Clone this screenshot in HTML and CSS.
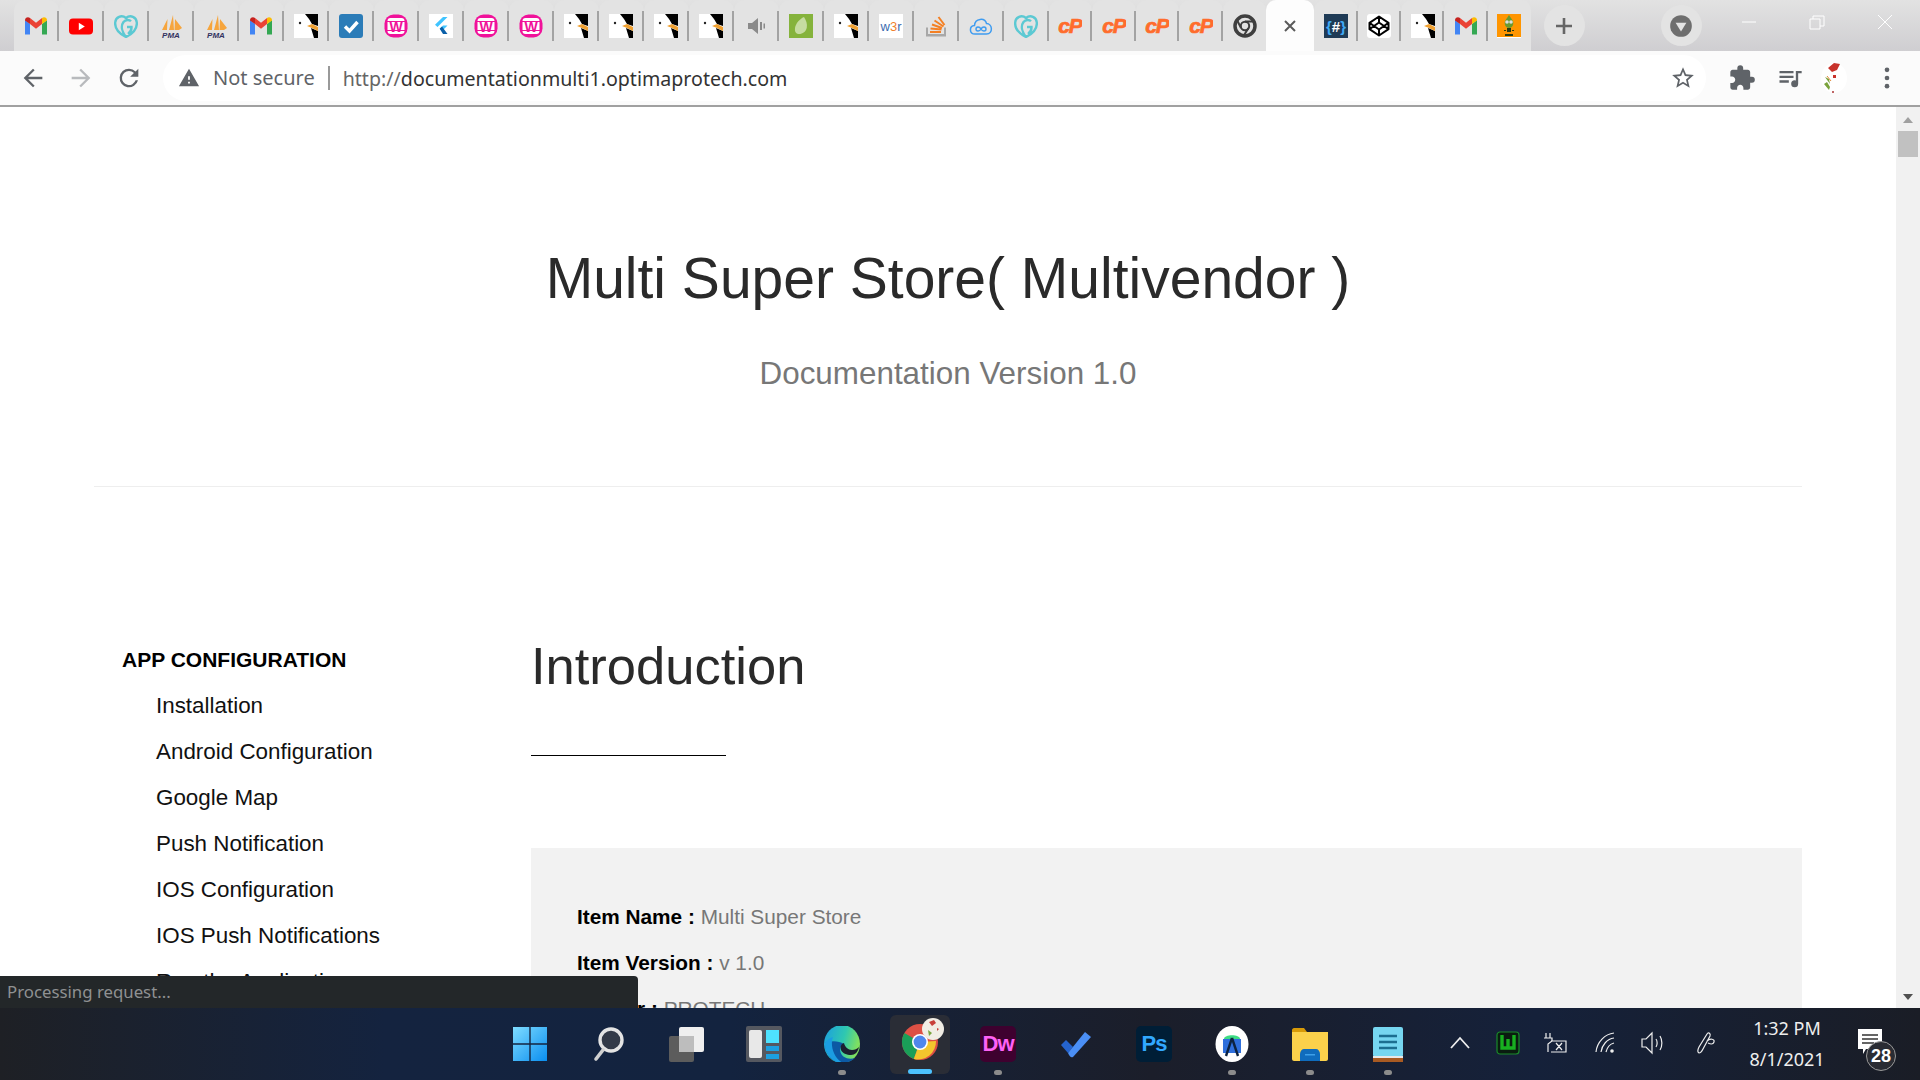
FILE: index.html
```html
<!DOCTYPE html>
<html lang="en">
<head>
    <meta charset="UTF-8">
    <meta name="viewport" content="width=device-width, initial-scale=1.0">
    <title>Multi Super Store - Documentation</title>
    <link rel="stylesheet" href="styles.css">
</head>
<body>
    <!-- favicons used more than once in the tab strip -->
    <svg class="sprites" width="0" height="0">
        <symbol id="gmail" viewBox="0 0 24 24">
            <path fill="#4285f4" d="M1 20.500h5V10L1 6z"/>
            <path fill="#34a853" d="M18 20.500h5V6l-5 4z"/>
            <path fill="#ea4335" d="M6 10V4l6 4.800L18 4v6l-6 4.800z"/>
            <path fill="#c5221f" d="M1 6.500V6c0-2.400 3-3.700 5-2v6z"/>
            <path fill="#fbbc04" d="M18 4c2-1.700 5-.4 5 2v.5L18 10z"/>
        </symbol>
        <symbol id="youtube" viewBox="0 0 24 24">
            <rect y="4.500" width="24" height="16" rx="4" fill="#f00"/>
            <path fill="#fff" d="M9.800 8.800l6 3.700-6 3.700z"/>
        </symbol>
        <symbol id="grav" viewBox="0 0 24 24">
            <path fill="none" stroke="#5cc9d3" stroke-width="2.400" d="M12 23C5 19.500.8 14 1.200 8.500 1.600 3 7.500.4 12 4 16.500.4 22.400 3 22.800 8.500 23.200 14 19 19.500 12 23zM12 23C8 18 6.500 12 9.500 8c2.200-2.800 6-2.400 7.500-.8M13 13h4.500c.2 3-1.500 5.500-3.500 7"/>
        </symbol>
        <symbol id="gull" viewBox="0 0 24 24">
            <rect width="24" height="24" fill="#fff"/>
            <path fill="#000" d="M11 0h13v12l-6-2-3-5zM17 14l7 3v7h-4z"/>
            <path fill="#f0a030" d="M13 12l5-2 6 3v4l-6-3z"/>
            <circle cx="6" cy="9" r="1.200" fill="#222"/>
        </symbol>
        <symbol id="todo" viewBox="0 0 24 24">
            <rect width="24" height="24" rx="3" fill="#2b7cb8"/>
            <path fill="none" stroke="#fff" stroke-width="3.400" d="M6 12.500l4.500 4.500L18.500 8"/>
        </symbol>
        <symbol id="flutter" viewBox="0 0 24 24">
            <rect width="24" height="24" fill="#fff"/>
            <path fill="#40c4ff" d="M14 3h4.500l-10 10L6 10.700zM14 11.500h4.500L13 17l-2.300-2.200z"/>
            <path fill="#0a5fa8" d="M10.700 14.800L13 12.500 18.500 20H14z"/>
        </symbol>
        <symbol id="mute" viewBox="0 0 24 24">
            <path fill="#8a8a8a" d="M4 9h4l6-5v16l-6-5H4zM16 8h2v8h-2zM19.500 9.500h1.500v5h-1.500z"/>
        </symbol>
        <symbol id="evernote" viewBox="0 0 24 24">
            <rect width="24" height="24" fill="#85b33c"/>
            <path fill="#c6dca1" d="M15 3c2 3 3.500 7 2.800 10.500C17 18 13 20.500 9 20c-2.500-.5-3.500-3-3-6 .8-4.500 4.500-9 9-11z"/>
        </symbol>
        <symbol id="stack" viewBox="0 0 24 24">
            <path fill="#a8a8a8" d="M2 13.500h2V20h16v-6.500h2V22.500H2z"/>
            <path fill="none" stroke="#f48024" stroke-width="2" d="M6 18h11M6.500 14.500l11 1M8 10.500l10 3.500M10.500 6.500l9 6M14.500 3l6 8"/>
        </symbol>
        <symbol id="cloud" viewBox="0 0 24 24">
            <path fill="none" stroke="#3f9cf0" stroke-width="1.500" d="M6 20c-6 0-6-8-.5-8.500C6 4 16 3.500 17.500 9.500c6 0 7 10.500 0 10.500z"/>
            <path fill="none" stroke="#3f9cf0" stroke-width="1.400" d="M12 15c-1.500-3-5-2.500-5 0s3.500 3 5 0 5-2.500 5 0-3.500 3-5 0z"/>
        </symbol>
        <symbol id="chromebw" viewBox="0 0 24 24">
            <circle cx="12" cy="12" r="10" fill="none" stroke="#3f3f3f" stroke-width="3.500"/>
            <circle cx="12" cy="12" r="4.200" fill="none" stroke="#3f3f3f" stroke-width="2"/>
            <path stroke="#3f3f3f" stroke-width="2" d="M12 7.500h9M8 14l-4-8M15.500 14l-5 8"/>
        </symbol>
        <symbol id="codepen" viewBox="0 0 24 24">
            <rect width="24" height="24" rx="3" fill="#fff"/>
            <path fill="none" stroke="#000" stroke-width="2" stroke-linejoin="round" d="M12 2.500l9.500 6.300v6.400L12 21.500l-9.500-6.300V8.800zM12 8.500l-5 3.500 5 3.500 5-3.500zM12 2.500v6M12 15.500v6M2.500 8.800L7 12l-4.500 3.200M21.500 8.800L17 12l4.500 3.200"/>
        </symbol>
        <symbol id="mascot" viewBox="0 0 24 24">
            <rect width="24" height="24" fill="#ff9500"/>
            <rect y="23" width="24" height="1" fill="#fff"/>
            <path fill="#6a9a2e" d="M12 1l4 6c1 4-1 7-4 7s-5-3-4-7z"/>
            <circle cx="10" cy="8" r="1.800" fill="#ddd"/><circle cx="14" cy="8" r="1.800" fill="#ddd"/>
            <path fill="#2c3a10" d="M10 14h4v4h-4zM7 16h2v1H7zM15 16h2v1h-2zM8 20h8v2H8z"/>
        </symbol>
        <symbol id="sails" viewBox="0 0 24 24">
            <path fill="#f6a53d" d="M3 16L8.500 5 8 16zM10 16L14 1l1 15zM15.500 16L16 5l7 9-3 2z"/>
        </symbol>
        <symbol id="wamp-ring" viewBox="0 0 24 24">
            <rect x=".5" y=".5" width="23" height="23" rx="9" fill="#f0129a"/>
            <rect x="3.500" y="4" width="17" height="16" rx="3" fill="#fff"/>
            <path fill="#f0129a" d="M3 7h18v1H3zM3 16h18v1H3z"/>
        </symbol>
    </svg>

    <div class="tab-strip">
        <div class="tab"><svg class="favicon"><use href="#gmail"/></svg></div>
        <div class="tab"><svg class="favicon"><use href="#youtube"/></svg></div>
        <div class="tab"><svg class="favicon"><use href="#grav"/></svg></div>
        <div class="tab"><svg class="favicon" viewBox="0 0 24 24"><use href="#sails"/><text class="sym-text" x="12" y="23.500" text-anchor="middle" font-size="8" font-style="italic" fill="#33335f">PMA</text></svg></div>
        <div class="tab"><svg class="favicon" viewBox="0 0 24 24"><use href="#sails"/><text class="sym-text" x="12" y="23.500" text-anchor="middle" font-size="8" font-style="italic" fill="#33335f">PMA</text></svg></div>
        <div class="tab"><svg class="favicon"><use href="#gmail"/></svg></div>
        <div class="tab"><svg class="favicon"><use href="#gull"/></svg></div>
        <div class="tab"><svg class="favicon"><use href="#todo"/></svg></div>
        <div class="tab"><svg class="favicon" viewBox="0 0 24 24"><use href="#wamp-ring"/><text class="sym-text" x="12" y="17.500" text-anchor="middle" font-size="14" fill="#f0129a">W</text></svg></div>
        <div class="tab"><svg class="favicon"><use href="#flutter"/></svg></div>
        <div class="tab"><svg class="favicon" viewBox="0 0 24 24"><use href="#wamp-ring"/><text class="sym-text" x="12" y="17.500" text-anchor="middle" font-size="14" fill="#f0129a">W</text></svg></div>
        <div class="tab"><svg class="favicon" viewBox="0 0 24 24"><use href="#wamp-ring"/><text class="sym-text" x="12" y="17.500" text-anchor="middle" font-size="14" fill="#f0129a">W</text></svg></div>
        <div class="tab"><svg class="favicon"><use href="#gull"/></svg></div>
        <div class="tab"><svg class="favicon"><use href="#gull"/></svg></div>
        <div class="tab"><svg class="favicon"><use href="#gull"/></svg></div>
        <div class="tab"><svg class="favicon"><use href="#gull"/></svg></div>
        <div class="tab"><svg class="favicon"><use href="#mute"/></svg></div>
        <div class="tab"><svg class="favicon"><use href="#evernote"/></svg></div>
        <div class="tab"><svg class="favicon"><use href="#gull"/></svg></div>
        <div class="tab"><svg class="favicon" viewBox="0 0 24 24"><rect width="24" height="24" fill="#fff"/><text class="sym-light" x="12" y="17" text-anchor="middle" font-size="13"><tspan fill="#3b6cb0">w</tspan><tspan fill="#f0812c">3</tspan><tspan fill="#3b6cb0">r</tspan></text></svg></div>
        <div class="tab"><svg class="favicon"><use href="#stack"/></svg></div>
        <div class="tab"><svg class="favicon"><use href="#cloud"/></svg></div>
        <div class="tab"><svg class="favicon"><use href="#grav"/></svg></div>
        <div class="tab narrow"><svg class="favicon" viewBox="0 0 24 24"><text class="cp-text" x="12" y="19" text-anchor="middle" font-size="21" letter-spacing="-1.200">cP</text></svg></div>
        <div class="tab narrow"><svg class="favicon" viewBox="0 0 24 24"><text class="cp-text" x="12" y="19" text-anchor="middle" font-size="21" letter-spacing="-1.200">cP</text></svg></div>
        <div class="tab narrow"><svg class="favicon" viewBox="0 0 24 24"><text class="cp-text" x="12" y="19" text-anchor="middle" font-size="21" letter-spacing="-1.200">cP</text></svg></div>
        <div class="tab narrow"><svg class="favicon" viewBox="0 0 24 24"><text class="cp-text" x="12" y="19" text-anchor="middle" font-size="21" letter-spacing="-1.200">cP</text></svg></div>
        <div class="tab narrow last"><svg class="favicon"><use href="#chromebw"/></svg></div>
        <div class="tab active">
            <svg class="tab-close" viewBox="0 0 16 16"><path d="M3 3l10 10M13 3L3 13"/></svg>
        </div>
        <div class="tab after"><svg class="favicon" viewBox="0 0 24 24"><rect width="24" height="24" fill="#1f3b56"/><text class="sym-text" x="12" y="17.500" text-anchor="middle" font-size="15"><tspan fill="#3fa9f5">{</tspan><tspan fill="#fff">#</tspan><tspan fill="#3fa9f5">}</tspan></text></svg></div>
        <div class="tab after"><svg class="favicon"><use href="#codepen"/></svg></div>
        <div class="tab after"><svg class="favicon"><use href="#gull"/></svg></div>
        <div class="tab after"><svg class="favicon"><use href="#gmail"/></svg></div>
        <div class="tab after last"><svg class="favicon"><use href="#mascot"/></svg></div>

        <div class="round-btn new-tab">
            <svg viewBox="0 0 20 20"><path d="M10 2v16M2 10h16"/></svg>
        </div>
        <div class="round-btn profile-drop">
            <svg viewBox="0 0 24 24"><circle cx="12" cy="12" r="10" fill="#6e6e6e"/><path fill="#e3e3e3" d="M7 9h10l-5 8z"/></svg>
        </div>
        <div class="window-controls">
            <svg viewBox="0 0 16 16"><path d="M1 8h14"/></svg>
            <svg viewBox="0 0 16 16"><path d="M1 5h10v10H1zM4 5V2h11v10h-4"/></svg>
            <svg viewBox="0 0 16 16"><path d="M1 1l14 14M15 1L1 15"/></svg>
        </div>
    </div>

    <div class="toolbar">
        <div class="nav-buttons">
            <svg class="tool-icon" viewBox="0 0 24 24"><path d="M20 11H7.830l5.590-5.590L12 4l-8 8 8 8 1.410-1.410L7.830 13H20v-2z"/></svg>
            <svg class="tool-icon disabled" viewBox="0 0 24 24"><path d="M12 4l-1.410 1.410L16.170 11H4v2h12.170l-5.580 5.590L12 20l8-8z"/></svg>
            <svg class="tool-icon" viewBox="0 0 24 24"><path d="M17.650 6.350A7.960 7.960 0 0 0 12 4a8 8 0 1 0 7.730 10h-2.080A6 6 0 1 1 12 6c1.660 0 3.140.69 4.220 1.780L13 11h7V4l-2.350 2.350z"/></svg>
        </div>
        <div class="omnibox">
            <svg class="warn-icon" viewBox="0 0 24 24"><path d="M1 21h22L12 2 1 21zm12-3h-2v-2h2v2zm0-4h-2v-4h2v4z"/></svg>
            <span class="not-secure">Not secure</span>
            <span class="url"><span class="scheme">http://</span>documentationmulti1.optimaprotech.com</span>
            <svg class="star-icon" viewBox="0 0 24 24"><path d="M22 9.240l-7.190-.62L12 2 9.190 8.630 2 9.240l5.460 4.730L5.820 21 12 17.270 18.180 21l-1.630-7.030L22 9.240zM12 15.400l-3.760 2.270 1-4.280-3.320-2.880 4.380-.38L12 6.100l1.710 4.040 4.380.38-3.320 2.880 1 4.280L12 15.400z"/></svg>
        </div>
        <div class="tool-right">
            <svg class="tool-icon" viewBox="0 0 24 24"><path d="M20.500 11H19V7c0-1.100-.9-2-2-2h-4V3.500a2.500 2.500 0 0 0-5 0V5H4c-1.100 0-2 .9-2 2v3.800h1.500c1.500 0 2.700 1.200 2.700 2.700S5 16.200 3.500 16.200H2V20c0 1.100.9 2 2 2h3.800v-1.500c0-1.500 1.200-2.700 2.700-2.700s2.700 1.200 2.700 2.700V22H17c1.100 0 2-.9 2-2v-4h1.500a2.500 2.500 0 0 0 0-5z"/></svg>
            <svg class="tool-icon" viewBox="0 0 24 24"><path d="M15 6H3v2h12V6zm0 4H3v2h12v-2zM3 16h8v-2H3v2zM17 6v8.180A3 3 0 0 0 16 14a3 3 0 1 0 3 3V8h3V6h-5z"/></svg>
            <svg class="avatar" viewBox="0 0 28 32">
                <ellipse cx="14" cy="16" rx="13" ry="15" fill="#fff"/>
                <path fill="#c8322b" d="M8 6l6-5 6 1-3 6-5 2zM13 13l3 0 0 3-3 0z"/>
                <path fill="#7aa33c" d="M4 22l5 6 1-3-3-5zM5 15l5 7-1-5z"/>
                <path stroke="#e08a3c" d="M7 14l4 5"/>
                <circle cx="13" cy="30" r="1" fill="#a33"/>
            </svg>
            <svg class="tool-icon" viewBox="0 0 24 24"><circle cx="12" cy="5" r="2"/><circle cx="12" cy="12" r="2"/><circle cx="12" cy="19" r="2"/></svg>
        </div>
    </div>

    <div class="viewport">
        <div class="page">
            <header class="site-header">
                <h1>Multi Super Store( Multivendor )</h1>
                <p>Documentation Version 1.0</p>
            </header>
            <hr class="header-rule">
            <div class="doc-layout">
                <nav class="sidebar">
                    <div class="nav-title">APP CONFIGURATION</div>
                    <ul>
                        <li>Installation</li>
                        <li>Android Configuration</li>
                        <li>Google Map</li>
                        <li>Push Notification</li>
                        <li>IOS Configuration</li>
                        <li>IOS Push Notifications</li>
                        <li>Run the Application</li>
                    </ul>
                </nav>
                <section class="doc-content">
                    <h2>Introduction</h2>
                    <div class="title-rule"></div>
                    <div class="info-box">
                        <p><b>Item Name :</b> Multi Super Store</p>
                        <p><b>Item Version :</b> v 1.0</p>
                        <p><b>Author :</b> PROTECH</p>
                    </div>
                </section>
            </div>
        </div>
        <div class="scrollbar">
            <div class="arrow up"></div>
            <div class="thumb"></div>
            <div class="arrow down"></div>
        </div>
        <div class="status-bubble">Processing request...</div>
    </div>

    <div class="taskbar">
        <div class="app">
            <svg class="app-icon" viewBox="0 0 36 36">
                <defs>
                    <linearGradient id="winBlue" x1="0" y1="0" x2="1" y2="1"><stop offset="0" stop-color="#7fdcff"/><stop offset="1" stop-color="#0a8ef0"/></linearGradient>
                </defs>
                <path fill="url(#winBlue)" d="M1 1h16.300v16.300H1zM18.700 1H35v16.300H18.700zM1 18.700h16.300V35H1zM18.700 18.700H35V35H18.700z"/>
            </svg>
        </div>
        <div class="app">
            <svg class="app-icon" viewBox="0 0 36 36">
                <circle cx="21" cy="14" r="11" fill="#333a48" stroke="#e4e4e4" stroke-width="3.400"/>
                <path stroke="#d0d0d0" stroke-width="3.600" stroke-linecap="round" d="M13 24l-7 9"/>
            </svg>
        </div>
        <div class="app">
            <svg class="app-icon" viewBox="0 0 36 36">
                <rect x="11" y="1" width="25" height="25" rx="2" fill="#efefef"/>
                <rect x="1" y="10" width="25" height="26" rx="2" fill="#5c5c5c"/>
                <rect x="11" y="10" width="15" height="16" fill="#bdbdbd"/>
            </svg>
        </div>
        <div class="app">
            <svg class="app-icon" viewBox="0 0 36 36">
                <rect width="36" height="36" rx="2" fill="#555860"/>
                <rect x="3" y="4" width="13" height="28" rx="2" fill="#e8e8e8"/>
                <rect x="20" y="4" width="13" height="13" fill="#4ee2ff"/>
                <rect x="20" y="20" width="13" height="5" fill="#1c9fe0"/>
                <rect x="20" y="28" width="13" height="5" fill="#1c9fe0"/>
            </svg>
        </div>
        <div class="app">
            <svg class="app-icon" viewBox="0 0 36 36">
                <defs>
                    <linearGradient id="edgeOuter" x1="0" y1="0" x2="1" y2=".3"><stop offset="0" stop-color="#1b9de2"/><stop offset=".6" stop-color="#2fc8b0"/><stop offset="1" stop-color="#7fe060"/></linearGradient>
                </defs>
                <ellipse cx="18" cy="18" rx="18" ry="19" fill="url(#edgeOuter)"/>
                <path fill="#0c59a4" d="M1 17c0 11 8 20 17 20 5 0 10-2 13-5-6 2-14 0-15-8 0-3 2-5 4-6-6-4-15-3-19-1z"/>
                <path fill="#1b9de2" d="M1 17c1-2 4-5 8-6-3 7 0 21 10 26C10 38 0 28 1 17z"/>
                <path fill="#1b2030" d="M20 17c-3 1-4 4-3 7 1 3 6 5 10 5 4 0 7-3 8-8-2 2-4 3-7 3-4 0-7-3-8-7z"/>
            </svg>
            <span class="dot"></span>
        </div>
        <div class="app current">
            <svg class="app-icon chrome-icon" viewBox="0 0 44 44">
                <circle cx="20" cy="24" r="18" fill="#dd5044"/>
                <path fill="#1a9f58" d="M4.400 15L20 24l-6.200 17A18 18 0 0 1 4.400 15z"/>
                <path fill="#f3c62d" d="M20 24l16 -1A18 18 0 0 1 13.800 41z"/>
                <circle cx="20" cy="24" r="8" fill="#fff"/>
                <circle cx="20" cy="24" r="6.400" fill="#4f86ec"/>
                <ellipse cx="33" cy="11" rx="11" ry="11" fill="#f1ede4"/>
                <path fill="#c8403a" d="M29 4l5-2 2 3-4 3zM37 10l2 1-2 2z"/>
                <path fill="#7aa33c" d="M28 12l4 3-3 3z"/>
            </svg>
            <span class="running"></span>
        </div>
        <div class="app">
            <div class="app-tile dw">Dw</div>
            <span class="dot"></span>
        </div>
        <div class="app">
            <svg class="app-icon" viewBox="0 0 36 36">
                <path fill="#2564cf" d="M3 19l5-5 7 7-5 6z"/>
                <path fill="#4b8ff5" d="M10 27L27 6l6 5-18 20c-2 1-3 0-5-4z"/>
            </svg>
        </div>
        <div class="app">
            <div class="app-tile ps">Ps</div>
        </div>
        <div class="app">
            <svg class="app-icon" viewBox="0 0 36 36">
                <ellipse cx="18" cy="18" rx="16.500" ry="18" fill="#fff"/>
                <path fill="#3ddc84" d="M10 13c0-5 16-5 16 0z"/>
                <path fill="#2f6fdb" d="M9 13h18v14H9z"/>
                <path stroke="#0d2340" stroke-width="2.400" fill="none" d="M18 12l-6 18M18 12l6 18"/>
            </svg>
            <span class="dot"></span>
        </div>
        <div class="app">
            <svg class="app-icon" viewBox="0 0 36 36">
                <path fill="#d79a08" d="M0 4c0-1 1-2 2-2h10l3 4h-15z"/>
                <path fill="#fbd14b" d="M0 6h36v27c0 1-1 2-2 2H2c-1 0-2-1-2-2z"/>
                <path fill="#0f6cbd" d="M8 35v-7c0-3 2-5 4-5h12c2 0 4 2 4 5v7z"/>
                <path fill="#3ea0e8" d="M13 28h10v1.500H13z"/>
            </svg>
            <span class="dot"></span>
        </div>
        <div class="app">
            <svg class="app-icon" viewBox="0 0 36 36">
                <rect x="3" y="1" width="30" height="30" rx="2" fill="#76d6f0"/>
                <rect x="3" y="31" width="30" height="5" fill="#a85a22"/>
                <rect x="3" y="30" width="30" height="2" fill="#e8e8e8"/>
                <path stroke="#1c6e90" stroke-width="2.600" d="M9 10h18M9 16h18M9 22h18"/>
            </svg>
            <span class="dot"></span>
        </div>

        <div class="tray">
            <svg class="tray-icon" viewBox="0 0 24 24"><path class="line" d="M3 17L12 7l9 10"/></svg>
            <svg class="tray-icon" viewBox="0 0 24 24">
                <rect x="1" y="1" width="22" height="22" rx="3" fill="#0a1c10" stroke="#1a8a2a" stroke-width="1.200"/>
                <path fill="none" stroke="#18b020" stroke-width="3.400" d="M6 4v13h12V4M12 8v8"/>
            </svg>
            <svg class="tray-icon" viewBox="0 0 24 24"><path class="line thin" d="M2 2v5M6 2v5M0 7h8v3l-4 3-0 6M4 13v8M7 10h15v11H7M22 12v6M12 12l6 7M18 12l-6 7"/></svg>
            <svg class="tray-icon wifi" viewBox="0 0 24 24"><path class="line thin" d="M2 21C3 11 11 3 20 2M7 21C8 14 13 8 20 7M12 21c1-4 4-8 8-9"/><circle cx="18" cy="20" r="1.800" fill="#eee"/></svg>
            <svg class="tray-icon" viewBox="0 0 24 24"><path class="line thin" d="M2 8h4l6-6v20l-6-6H2zM16 8c1.500 2 1.500 6 0 8M20 5c2.500 4 2.500 10 0 14"/></svg>
            <svg class="tray-icon pen" viewBox="0 0 24 24"><path class="line thin" d="M4 22c-2-1-1-4 0-6l8-13c1-2 4-1 3 2l-7 13c-1 2-2 4-4 4zM12 10c3-3 8-2 7 1s-4 2-6 1"/></svg>
        </div>
        <div class="clock">
            <div>1:32 PM</div>
            <div>8/1/2021</div>
        </div>
        <div class="notify">
            <svg viewBox="0 0 24 24" width="24" height="26"><path fill="#fff" d="M0 0h24v20H8l-3 5v-5H0z"/><path stroke="#333" stroke-width="1.600" d="M4 6h16M4 10h16M4 14h12"/></svg>
            <span class="notify-count">28</span>
        </div>
    </div>
</body>
</html>
```

FILE: styles.css
```css
html, body {
    margin: 0;
    height: 100%;
}

body {
    display: flex;
    flex-direction: column;
    overflow: hidden;
    font-family: "Liberation Sans", Arial, sans-serif;
    background-color: #fff;
}

.sprites {
    display: block;
    height: 0;
}

.sym-text {
    font-family: "Liberation Sans", Arial, sans-serif;
    font-weight: bold;
}

.sym-light {
    font-family: "Liberation Sans", Arial, sans-serif;
}

.cp-text {
    font-family: "Liberation Sans", Arial, sans-serif;
    font-weight: bold;
    font-style: italic;
    fill: #ff6c2c;
    stroke: #ff6c2c;
    stroke-width: .7;
}

/* tab strip */
.tab-strip {
    display: flex;
    flex: 0 0 51px;
    padding-left: 13.5px;
    background: linear-gradient(#e2e2e2, #cfced1);
}

.tab {
    flex: 0 0 45px;
    display: flex;
    align-items: flex-start;
    justify-content: center;
    box-sizing: border-box;
    padding-top: 14px;
    border-radius: 10px 10px 0 0;
    background: linear-gradient(#a3a3a3, #a3a3a3) right 11px / 2px 30px no-repeat, #e3e3e3;
}

.tab.narrow {
    flex-basis: 43.6px;
}

.tab.after {
    flex-basis: 43.3px;
}

.tab.last {
    background: #e3e3e3;
}

.tab.active {
    flex-basis: 48px;
    background: #fdfdfd;
}

.favicon {
    width: 24px;
    height: 24px;
}

.tab-close {
    width: 16px;
    height: 16px;
    margin-top: 4px;
    fill: none;
    stroke: #5a5a5a;
    stroke-width: 2;
}

.round-btn {
    display: flex;
    align-items: center;
    justify-content: center;
    width: 41px;
    height: 41px;
    margin-top: 5px;
    border-radius: 50%;
    background-color: #e3e3e3;
}

.new-tab {
    margin-left: 13px;
}

.new-tab svg {
    width: 20px;
    height: 20px;
    fill: none;
    stroke: #666;
    stroke-width: 2.600;
}

.profile-drop {
    margin-left: 76px;
}

.profile-drop svg {
    width: 26px;
    height: 26px;
}

.window-controls {
    display: flex;
    gap: 52px;
    margin-left: 39px;
    padding-top: 14px;
}

.window-controls svg {
    width: 16px;
    height: 16px;
    fill: none;
    stroke: #fff;
    stroke-width: 1;
}

/* toolbar and address bar */
.toolbar {
    display: flex;
    align-items: center;
    flex: 0 0 54px;
    background-color: #fbfbfb;
    border-bottom: 2px solid #a0a0a0;
}

.nav-buttons {
    display: flex;
    gap: 20px;
    padding-left: 19px;
}

.tool-icon {
    width: 28px;
    height: 28px;
    fill: #5f6368;
}

.tool-icon.disabled {
    fill: #b8babd;
}

.omnibox {
    display: flex;
    align-items: center;
    flex: 0 0 1543px;
    height: 46px;
    margin-left: 20px;
    padding-left: 15px;
    box-sizing: border-box;
    border-radius: 23px;
    background-color: #fff;
    font-family: "Noto Sans", sans-serif;
    font-size: 20px;
}

.warn-icon {
    width: 22px;
    height: 22px;
    fill: #5f6368;
}

.not-secure {
    margin-left: 13px;
    padding-right: 13px;
    border-right: 2px solid #999;
    line-height: 24px;
    color: #5f6368;
}

.url {
    margin-left: 13px;
    font-size: 19.600px;
    color: #333;
}

.scheme {
    color: #666;
}

.star-icon {
    width: 26px;
    height: 26px;
    margin-left: auto;
    margin-right: 10px;
    fill: #5f6368;
}

.tool-right {
    display: flex;
    align-items: center;
    gap: 20px;
    padding-left: 22px;
}

.avatar {
    width: 28px;
    height: 32px;
    margin-left: -4px;
    margin-right: 5px;
}

/* page */
.viewport {
    position: relative;
    flex: 1;
    display: flex;
    min-height: 0;
}

.page {
    flex: 1;
    min-width: 0;
    overflow: hidden;
}

.site-header {
    padding-top: 138px;
    text-align: center;
}

.site-header h1 {
    margin: 0;
    font-size: 57px;
    font-weight: 400;
    line-height: 66px;
    color: #2a2a2a;
}

.site-header p {
    margin: 45px 0 0;
    font-size: 31.400px;
    line-height: 36px;
    color: #777;
}

.header-rule {
    margin: 94px 94px 0;
    border: 0;
    border-top: 1px solid #eee;
}

.doc-layout {
    display: grid;
    grid-template-columns: 437px 1fr;
    margin: 150px 94px 0;
}

.sidebar {
    padding-left: 28px;
    color: #111;
}

.nav-title {
    font-size: 21px;
    font-weight: bold;
    line-height: 46px;
    color: #000;
}

.sidebar ul {
    margin: 0;
    padding-left: 34px;
    list-style: none;
}

.sidebar li {
    font-size: 22.400px;
    line-height: 46px;
}

.doc-content h2 {
    margin: 0;
    font-size: 52.500px;
    font-weight: 400;
    line-height: 58px;
    color: #2a2a2a;
}

.title-rule {
    width: 195px;
    height: 1px;
    margin-top: 60px;
    background-color: #000;
}

.info-box {
    margin-top: 92px;
    padding: 46px 46px;
    background-color: #f2f2f2;
    font-size: 20.800px;
    color: #777;
}

.info-box p {
    margin: 0;
    line-height: 46px;
}

.info-box b {
    color: #000;
}

/* scrollbar */
.scrollbar {
    display: flex;
    flex-direction: column;
    align-items: center;
    flex: 0 0 24px;
    background-color: #f1f1f1;
}

.thumb {
    width: 20px;
    height: 26px;
    margin-top: 8px;
    background-color: #c1c1c1;
}

.arrow {
    width: 0;
    height: 0;
    border-left: 5px solid transparent;
    border-right: 5px solid transparent;
}

.arrow.up {
    margin-top: 10px;
    border-bottom: 6px solid #a0a0a0;
}

.arrow.down {
    margin-top: auto;
    margin-bottom: 8px;
    border-top: 6px solid #505050;
}

.status-bubble {
    position: absolute;
    left: 0;
    bottom: 0;
    width: 638px;
    height: 32px;
    box-sizing: border-box;
    padding-left: 7px;
    border-top-right-radius: 4px;
    background-color: #232729;
    font-family: "Noto Sans", sans-serif;
    font-size: 16.800px;
    line-height: 32px;
    color: #8f9192;
}

/* taskbar */
.taskbar {
    display: flex;
    flex: 0 0 72px;
    padding-left: 491px;
    background: linear-gradient(90deg, #1e2025 0, #14233f 20%, #13233f 38%, #1b1e2a 60%, #15213a 80%, #1a1d26 100%);
    color: #eee;
}

.app {
    position: relative;
    display: flex;
    flex-direction: column;
    align-items: center;
    flex: 0 0 78px;
    height: 72px;
    box-sizing: border-box;
    padding-top: 18px;
}

.app-icon {
    width: 36px;
    height: 36px;
}

.app.current::before {
    content: "";
    position: absolute;
    top: 7px;
    left: 9px;
    right: 9px;
    bottom: 6px;
    border-radius: 6px;
    background-color: #2a2d36;
}

.chrome-icon {
    position: relative;
    width: 44px;
    height: 44px;
    margin-top: -8px;
    margin-left: 4px;
}

.running {
    position: relative;
    width: 24px;
    height: 5px;
    margin-top: 7px;
    border-radius: 3px;
    background-color: #4cc2ff;
}

.dot {
    width: 8px;
    height: 5px;
    margin-top: 8px;
    border-radius: 3px;
    background-color: #8c8c8c;
}

.app-tile {
    display: flex;
    align-items: center;
    justify-content: center;
    width: 36px;
    height: 36px;
    border-radius: 5px;
    font-family: "Liberation Sans", Arial, sans-serif;
    font-size: 22px;
    font-weight: bold;
    letter-spacing: -1px;
}

.dw {
    background-color: #3e012f;
    color: #ff61f6;
}

.ps {
    background-color: #001e36;
    color: #31a8ff;
}

.tray {
    display: flex;
    align-items: center;
    gap: 24px;
    height: 70px;
    padding-left: 21px;
}

.tray-icon {
    width: 24px;
    height: 24px;
}

.tray-icon.wifi {
    margin-left: 2px;
    margin-right: -2px;
}

.tray-icon.pen {
    margin-left: 7px;
}

.line {
    fill: none;
    stroke: #eee;
    stroke-width: 1.800;
}

.line.thin {
    stroke-width: 1.200;
}

.clock {
    width: 100px;
    margin-left: 18px;
    padding-top: 5px;
    font-family: "Noto Sans", sans-serif;
    font-size: 18px;
    line-height: 31px;
    text-align: center;
}

.notify {
    position: relative;
    margin-left: 21px;
    padding-top: 20px;
}

.notify-count {
    position: absolute;
    left: 8px;
    top: 33px;
    width: 28px;
    height: 28px;
    border: 1px solid #999;
    border-radius: 50%;
    background-color: #2a2c33;
    font-size: 18px;
    font-weight: bold;
    line-height: 28px;
    text-align: center;
    color: #fff;
}
```
